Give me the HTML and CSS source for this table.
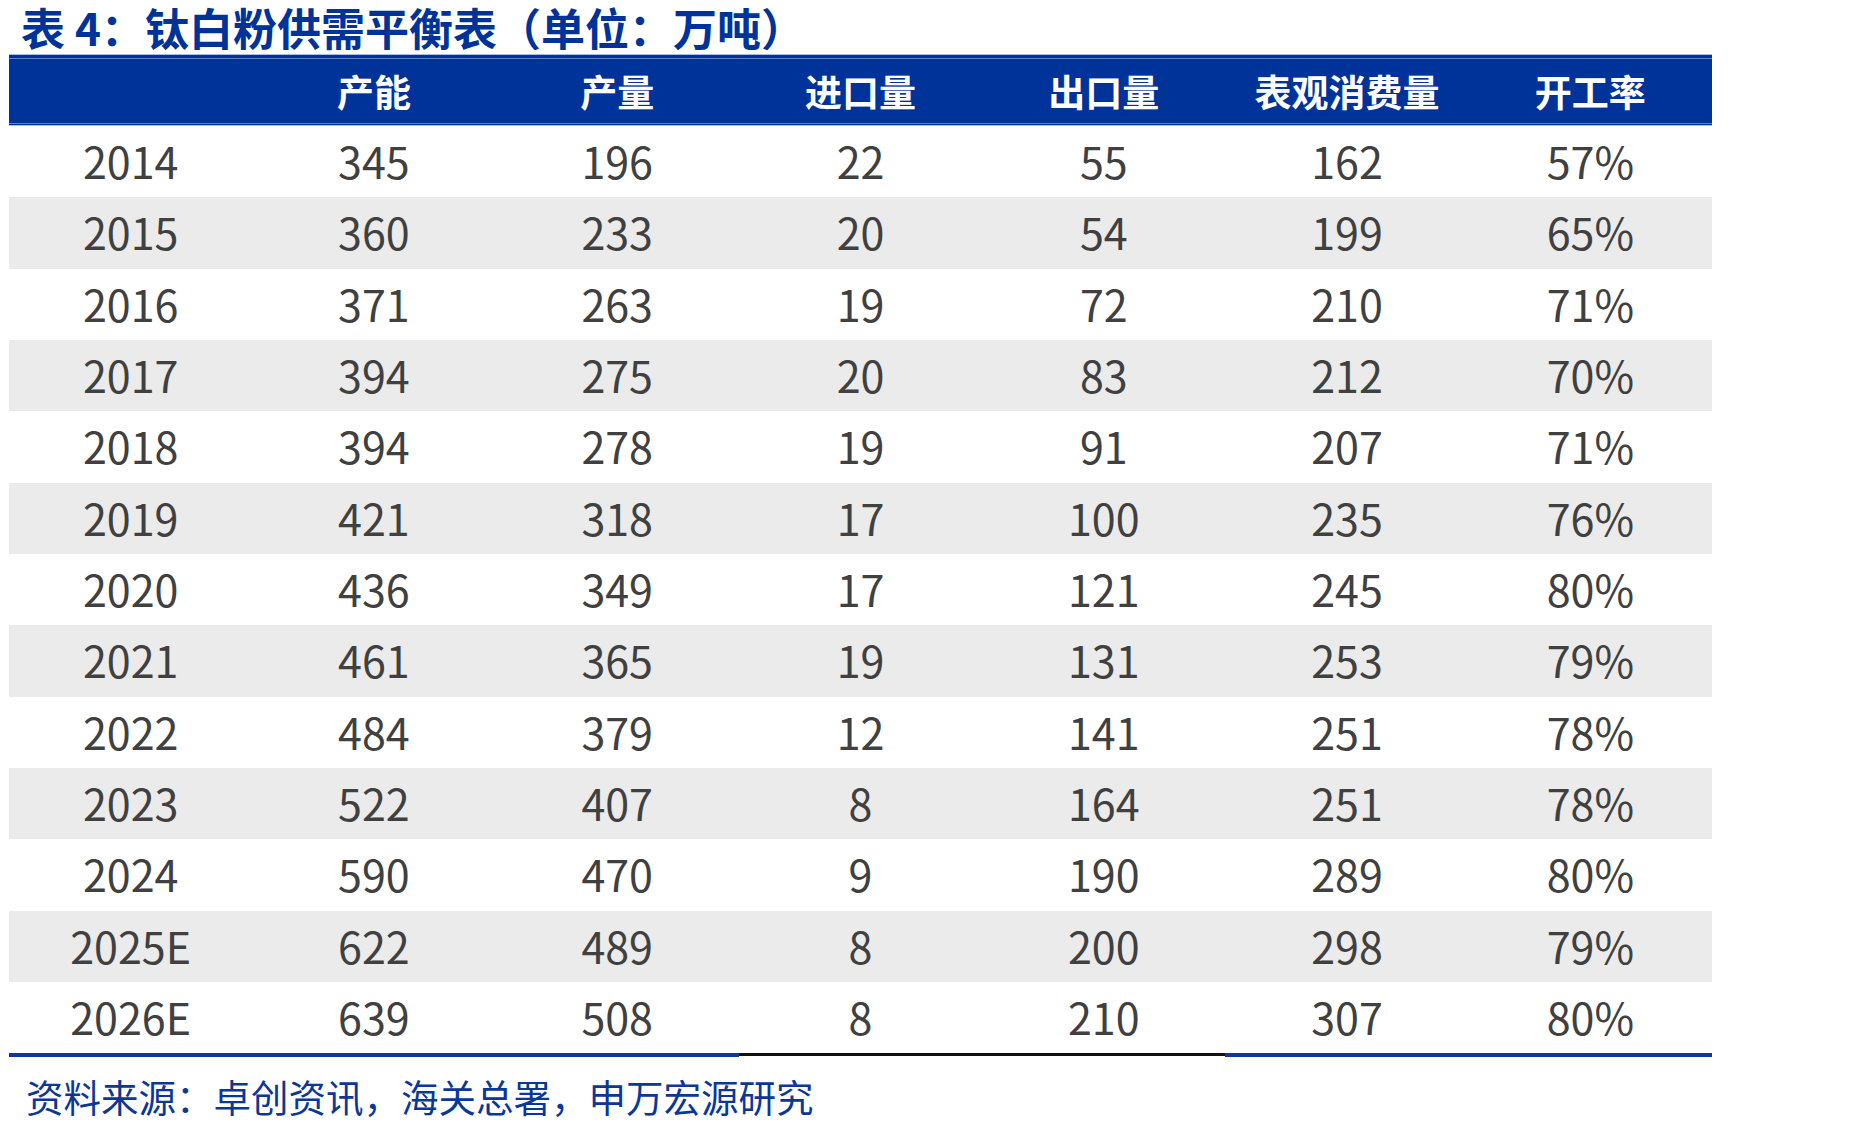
FILE: index.html
```html
<!DOCTYPE html>
<html lang="zh-CN">
<head>
<meta charset="utf-8">
<title>表 4：钛白粉供需平衡表（单位：万吨）</title>
<link rel="stylesheet" href="styles.css">
</head>
<body>
<div class="page">
  <h1 class="title">表 4：钛白粉供需平衡表（单位：万吨）</h1>
  <div class="table">
    <div class="thead">
      <div class="thead-inner">
        <div class="th"></div>
        <div class="th">产能</div>
        <div class="th">产量</div>
        <div class="th">进口量</div>
        <div class="th">出口量</div>
        <div class="th">表观消费量</div>
        <div class="th">开工率</div>
      </div>
    </div>
    <div class="tbody">
      <div class="tr"><div class="td">2014</div><div class="td">345</div><div class="td">196</div><div class="td">22</div><div class="td">55</div><div class="td">162</div><div class="td">57%</div></div>
      <div class="tr alt"><div class="td">2015</div><div class="td">360</div><div class="td">233</div><div class="td">20</div><div class="td">54</div><div class="td">199</div><div class="td">65%</div></div>
      <div class="tr"><div class="td">2016</div><div class="td">371</div><div class="td">263</div><div class="td">19</div><div class="td">72</div><div class="td">210</div><div class="td">71%</div></div>
      <div class="tr alt"><div class="td">2017</div><div class="td">394</div><div class="td">275</div><div class="td">20</div><div class="td">83</div><div class="td">212</div><div class="td">70%</div></div>
      <div class="tr"><div class="td">2018</div><div class="td">394</div><div class="td">278</div><div class="td">19</div><div class="td">91</div><div class="td">207</div><div class="td">71%</div></div>
      <div class="tr alt"><div class="td">2019</div><div class="td">421</div><div class="td">318</div><div class="td">17</div><div class="td">100</div><div class="td">235</div><div class="td">76%</div></div>
      <div class="tr"><div class="td">2020</div><div class="td">436</div><div class="td">349</div><div class="td">17</div><div class="td">121</div><div class="td">245</div><div class="td">80%</div></div>
      <div class="tr alt"><div class="td">2021</div><div class="td">461</div><div class="td">365</div><div class="td">19</div><div class="td">131</div><div class="td">253</div><div class="td">79%</div></div>
      <div class="tr"><div class="td">2022</div><div class="td">484</div><div class="td">379</div><div class="td">12</div><div class="td">141</div><div class="td">251</div><div class="td">78%</div></div>
      <div class="tr alt"><div class="td">2023</div><div class="td">522</div><div class="td">407</div><div class="td">8</div><div class="td">164</div><div class="td">251</div><div class="td">78%</div></div>
      <div class="tr"><div class="td">2024</div><div class="td">590</div><div class="td">470</div><div class="td">9</div><div class="td">190</div><div class="td">289</div><div class="td">80%</div></div>
      <div class="tr alt"><div class="td">2025E</div><div class="td">622</div><div class="td">489</div><div class="td">8</div><div class="td">200</div><div class="td">298</div><div class="td">79%</div></div>
      <div class="tr last"><div class="td">2026E</div><div class="td">639</div><div class="td">508</div><div class="td dark">8</div><div class="td dark">210</div><div class="td">307</div><div class="td">80%</div></div>
    </div>
  </div>
  <p class="source">资料来源：卓创资讯，海关总署，申万宏源研究</p>
</div>
</body>
</html>
```
FILE: styles.css
```css
html, body {
  margin: 0;
  padding: 0;
  background: #ffffff;
}

.page {
  width: 1858px;
  height: 1133px;
  font-family: "Noto Sans CJK SC", "Noto Sans", sans-serif;
}

.title {
  margin: 0;
  padding: 0 0 0 21px;
  height: 54px;
  font-size: 44px;
  line-height: 54px;
  font-weight: 700;
  color: #003399;
  white-space: nowrap;
}

.table {
  margin-left: 9px;
  width: 1703px;
}

.thead {
  background: #003399;
  border-top: 1px solid #a9bce3;
  border-bottom: 1px solid #a9bce3;
  padding: 3px 0 1px;
}

.thead-inner {
  display: grid;
  grid-template-columns: repeat(7, 1fr);
  border-top: 1px solid #5f7fc4;
  border-bottom: 1px solid #5f7fc4;
  height: 64px;
}

.th {
  color: #ffffff;
  font-size: 37px;
  font-weight: 700;
  line-height: 64px;
  padding-top: 0;
  text-align: center;
  white-space: nowrap;
}

.tbody {
  display: grid;
  grid-auto-rows: 71.33px;
}

.tr {
  display: grid;
  grid-template-columns: repeat(7, 1fr);
  background: #ffffff;
}

.tr.alt {
  background: #ebebeb;
}

.td {
  font-size: 43px;
  line-height: 68px;
  padding-top: 0;
  color: #404040;
  text-align: center;
  white-space: nowrap;
}

.tr.last {
  height: 75.33px;
}

.tr.last .td {
  border-bottom: 4px solid #0a3a9c;
}

.tr.last .td.dark {
  border-bottom: 3px solid #111111;
  margin-bottom: 1px;
}

.source {
  margin: 0;
  padding: 18px 0 0 26px;
  font-size: 37.5px;
  line-height: 50px;
  color: #0b3797;
  white-space: nowrap;
}
```
